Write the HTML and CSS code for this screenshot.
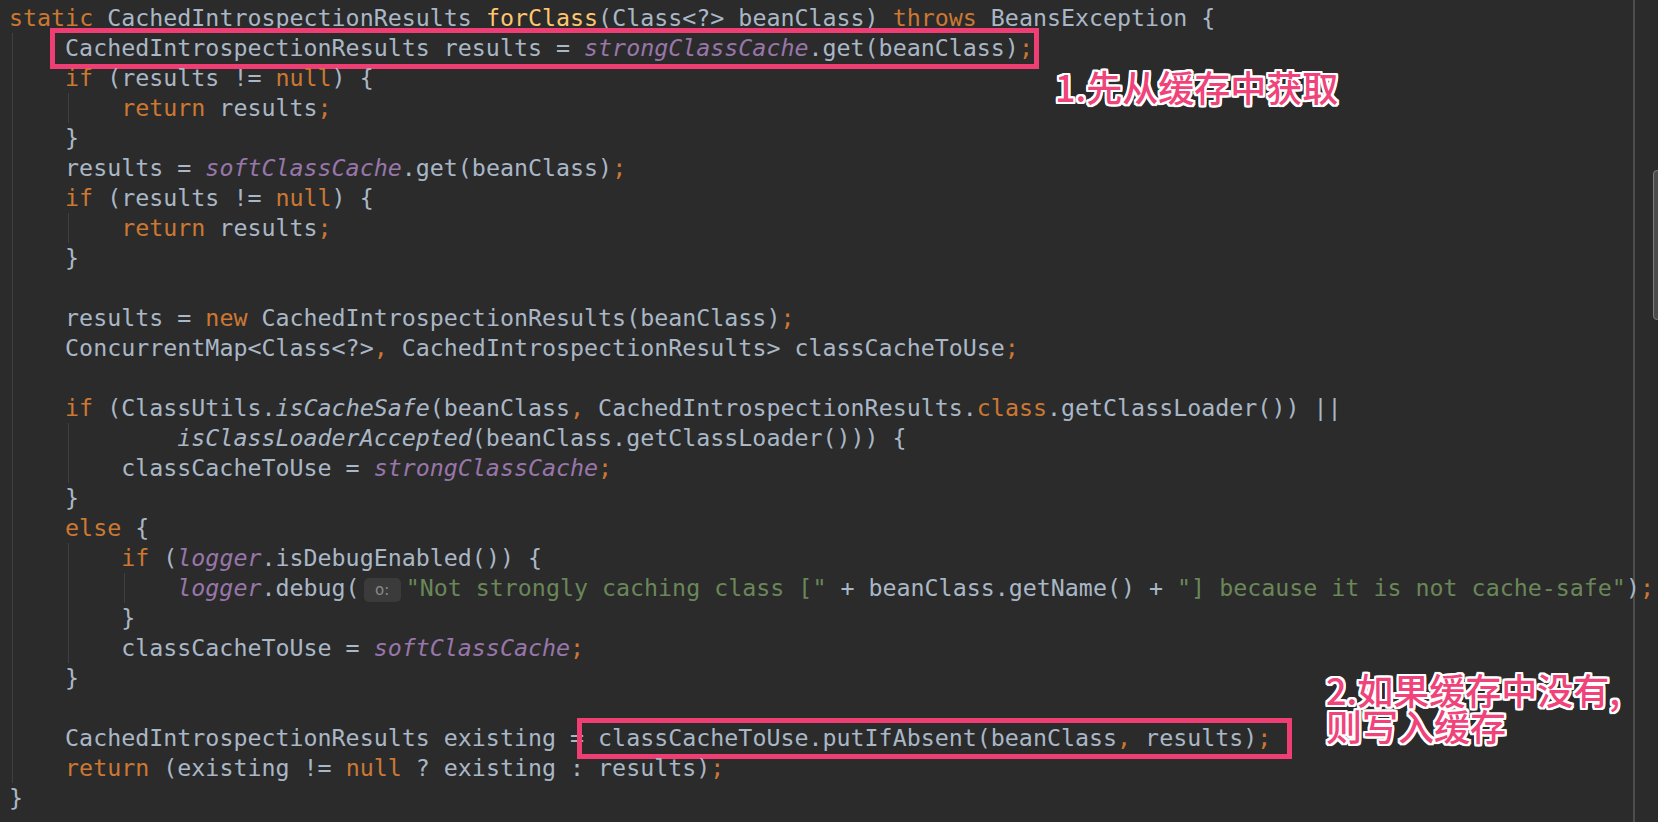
FILE: index.html
```html
<!DOCTYPE html>
<html lang="zh-CN">
<head>
    <meta charset="UTF-8">
    <meta name="viewport" content="width=device-width, initial-scale=1.0">
    <title>CachedIntrospectionResults.forClass</title>
    <link rel="stylesheet" href="styles.css">
</head>
<body>
    <div class="editor">
        <div class="code">
            <div class="line"><span class="k">static</span> CachedIntrospectionResults <span class="m">forClass</span>(Class&lt;?&gt; beanClass) <span class="k">throws</span> BeansException {</div>
            <div class="block">
                <div class="line"><span class="mark mark-one">CachedIntrospectionResults results = <span class="f">strongClassCache</span>.get(beanClass)<span class="k">;</span></span></div>
                <div class="line"><span class="k">if</span> (results != <span class="k">null</span>) {</div>
                <div class="block">
                    <div class="line"><span class="k">return</span> results<span class="k">;</span></div>
                </div>
                <div class="line">}</div>
                <div class="line">results = <span class="f">softClassCache</span>.get(beanClass)<span class="k">;</span></div>
                <div class="line"><span class="k">if</span> (results != <span class="k">null</span>) {</div>
                <div class="block">
                    <div class="line"><span class="k">return</span> results<span class="k">;</span></div>
                </div>
                <div class="line">}</div>
                <div class="line"> </div>
                <div class="line">results = <span class="k">new</span> CachedIntrospectionResults(beanClass)<span class="k">;</span></div>
                <div class="line">ConcurrentMap&lt;Class&lt;?&gt;<span class="k">,</span> CachedIntrospectionResults&gt; classCacheToUse<span class="k">;</span></div>
                <div class="line"> </div>
                <div class="line"><span class="k">if</span> (ClassUtils.<span class="i">isCacheSafe</span>(beanClass<span class="k">,</span> CachedIntrospectionResults.<span class="k">class</span>.getClassLoader()) ||</div>
                <div class="block">
                    <div class="line">    <span class="i">isClassLoaderAccepted</span>(beanClass.getClassLoader())) {</div>
                    <div class="line">classCacheToUse = <span class="f">strongClassCache</span><span class="k">;</span></div>
                </div>
                <div class="line">}</div>
                <div class="line"><span class="k">else</span> {</div>
                <div class="block">
                    <div class="line"><span class="k">if</span> (<span class="f">logger</span>.isDebugEnabled()) {</div>
                    <div class="block">
                        <div class="line"><span class="f">logger</span>.debug(<span class="hint">o:</span><span class="s">"Not strongly caching class ["</span> + beanClass.getName() + <span class="s">"] because it is not cache-safe"</span>)<span class="k">;</span></div>
                    </div>
                    <div class="line">}</div>
                    <div class="line">classCacheToUse = <span class="f">softClassCache</span><span class="k">;</span></div>
                </div>
                <div class="line">}</div>
                <div class="line"> </div>
                <div class="line">CachedIntrospectionResults existing = <span class="mark mark-two">classCacheToUse.putIfAbsent(beanClass<span class="k">,</span> results)<span class="k">;</span></span></div>
                <div class="line"><span class="k">return</span> (existing != <span class="k">null</span> ? existing : results)<span class="k">;</span></div>
            </div>
            <div class="line">}</div>
        </div>

        <div class="note note-one">1.先从缓存中获取</div>
        <div class="note note-two">2.如果缓存中没有,<br>则写入缓存</div>
        <div class="scroll-thumb"></div>
    </div>
</body>
</html>
```

FILE: styles.css
```css
body {
    margin: 0;
    background-color: #2b2b2b;
    overflow: hidden;
}
.editor {
    position: relative;
    height: 822px;
    background-color: #2b2b2b;
    background-image: linear-gradient(to right, transparent 1633px, #4d4d4d 1633px, #4d4d4d 1635px, transparent 1635px);
}
.code {
    padding: 3px 0 0 9px;
    font-family: "DejaVu Sans Mono", "Liberation Mono", monospace;
    font-size: 23.3px;
    line-height: 30px;
    color: #a9b7c6;
}
.line {
    white-space: pre;
    height: 30px;
}
.block {
    margin-left: 3px;
    padding-left: calc(4ch - 4px);
    border-left: 1px solid #3f3f3f;
}
.k {
    color: #cc7832;
}
.m {
    color: #ffc66d;
}
.f {
    color: #9876aa;
    font-style: italic;
}
.i {
    font-style: italic;
}
.s {
    color: #6a8759;
}
.hint {
    display: inline-block;
    margin: 0 5px 0 4px;
    width: 37px;
    height: 24px;
    line-height: 24px;
    vertical-align: 1px;
    border-radius: 5px;
    background-color: #3b3b3b;
    color: #8a8a8a;
    font-family: "DejaVu Sans", sans-serif;
    font-size: 15px;
    text-align: center;
}
.mark {
    display: inline-block;
    border: 5px solid #ef3e73;
}
.mark-one {
    padding: 0 1px 1px 10px;
    margin: -5px -6px -6px -15px;
}
.mark-two {
    padding: 0 16px 1px 16px;
    margin: -5px -21px -6px -21px;
}
.note {
    position: absolute;
    color: #f0437a;
    font-family: "Noto Sans CJK SC", "Noto Sans", sans-serif;
    font-weight: 500;
    font-size: 36px;
    line-height: 36px;
    text-shadow:
        2px 0 0 #fff, -2px 0 0 #fff, 0 2px 0 #fff, 0 -2px 0 #fff,
        2px 2px 0 #fff, -2px -2px 0 #fff, 2px -2px 0 #fff, -2px 2px 0 #fff,
        1px 2px 0 #fff, -1px 2px 0 #fff, 1px -2px 0 #fff, -1px -2px 0 #fff,
        2px 1px 0 #fff, -2px 1px 0 #fff, 2px -1px 0 #fff, -2px -1px 0 #fff;
}
.note-one {
    left: 1055px;
    top: 68px;
}
.note-two {
    left: 1326px;
    top: 671px;
}
.scroll-thumb {
    position: absolute;
    right: -3px;
    top: 170px;
    width: 6px;
    height: 148px;
    border-radius: 4px;
    background-color: #4b4b4b;
    border: 1px solid #7c7c7c;
}
```
